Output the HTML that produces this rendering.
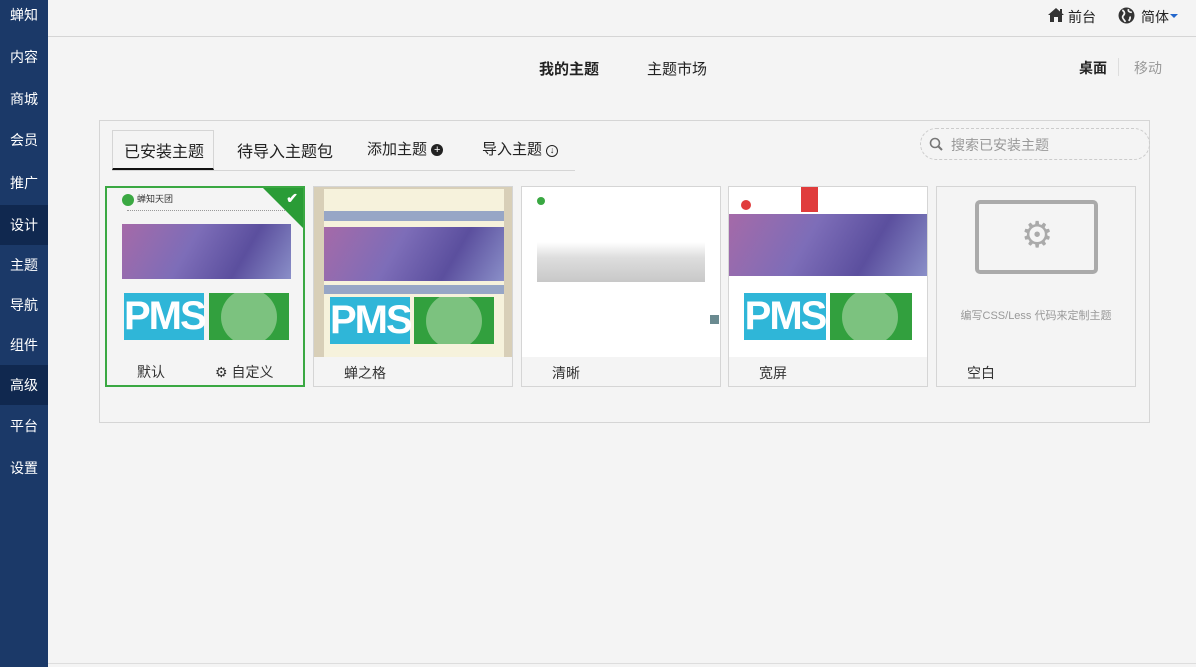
<!DOCTYPE html><html><head><meta charset="utf-8"><style>
*{margin:0;padding:0;box-sizing:border-box}
body{width:1196px;height:667px;background:#f4f4f4;font-family:"Liberation Sans","Noto Sans CJK SC",sans-serif;font-size:14px;color:#222;position:relative;overflow:hidden}
.side{position:absolute;left:0;top:0;width:48px;height:667px;background:#1b3968}
.side div{position:absolute;left:0;width:48px;height:40px;line-height:40px;text-align:center;color:#fff;font-size:14px}
.side .act{background:#10284f}
.top{position:absolute;left:48px;top:0;right:0;height:37px;border-bottom:1px solid #d5d5d5}
.abs{position:absolute}
.panel{position:absolute;left:99px;top:120px;width:1051px;height:303px;border:1px solid #d5d5d5}
.card{position:absolute;top:186px;width:200px;height:201px;border:1px solid #d5d5d5;background:#f4f4f4}
.thumb{position:absolute;left:0;top:0;width:198px;height:170px;background:#fff;overflow:hidden}
.lbl{position:absolute;top:176px;font-size:14px;color:#333}
.hero{position:absolute;background:linear-gradient(120deg,#a56aa8,#7d6db8 40%,#5b4f9e 70%,#8a8fc8)}
.pms{position:absolute;background:#2fb6d8;color:#fff;font-weight:bold;font-size:40px;letter-spacing:-2px;text-align:center;font-family:"Liberation Sans Narrow","Liberation Sans",sans-serif}
.grp{position:absolute;background:#32a03e;overflow:hidden}
.grp i{position:absolute;left:12px;top:-4px;width:56px;height:56px;border-radius:50%;background:#7cc27f}
</style></head><body>
<div class="side">
<div style="top:-5px">蝉知</div><div style="top:37px">内容</div><div style="top:79px">商城</div><div style="top:120px">会员</div><div style="top:163px">推广</div><div class="act" style="top:205px">设计</div><div style="top:245px">主题</div><div style="top:285px">导航</div><div style="top:325px">组件</div><div class="act" style="top:365px">高级</div><div style="top:406px">平台</div><div style="top:448px">设置</div>
</div>
<div class="top"></div>
<div class="abs" style="left:48px;top:663px;width:1148px;height:1px;background:#ddd"></div>
<svg class="abs" style="left:1047px;top:7px" width="18" height="16" viewBox="0 0 18 16"><path d="M9 1L1 8h2v7h4v-5h4v5h4V8h2z" fill="#333"/><rect x="13" y="2" width="2" height="4" fill="#333"/></svg>
<div class="abs" style="left:1068px;top:7px">前台</div>
<svg class="abs" style="left:1118px;top:7px" width="17" height="17" viewBox="0 0 16 16"><circle cx="8" cy="8" r="7.5" fill="#333"/><path d="M4 3c2 1 3 3 1 5s1 4 2 6M10 2c-1 2 1 3 3 3M11 9c1 1 0 3-1 4" stroke="#f4f4f4" stroke-width="1.6" fill="none"/></svg>
<div class="abs" style="left:1141px;top:7px">简体</div>
<div class="abs" style="left:1170px;top:14px;border:4px solid transparent;border-top-color:#2266cc;border-bottom:0"></div>
<div class="abs" style="left:539px;top:58px;font-size:15px;font-weight:bold">我的主题</div>
<div class="abs" style="left:647px;top:58px;font-size:15px">主题市场</div>
<div class="abs" style="left:1079px;top:58px;font-weight:bold">桌面</div>
<div class="abs" style="left:1118px;top:58px;width:1px;height:18px;background:#ddd"></div>
<div class="abs" style="left:1134px;top:58px;color:#999">移动</div>
<div class="panel"></div>
<div class="abs" style="left:112px;top:170px;width:463px;height:1px;background:#d5d5d5"></div>
<div class="abs" style="left:112px;top:130px;width:102px;height:40px;border:1px solid #d5d5d5;border-bottom:2px solid #111;background:#f4f4f4"></div>
<div class="abs" style="left:124px;top:138px;font-size:16px">已安装主题</div>
<div class="abs" style="left:237px;top:138px;font-size:16px">待导入主题包</div>
<div class="abs" style="left:367px;top:138px;font-size:15px">添加主题 <span style="display:inline-block;width:12px;height:12px;border-radius:50%;background:#222;color:#fff;font-size:11px;line-height:12px;text-align:center;vertical-align:1px">+</span></div>
<div class="abs" style="left:482px;top:138px;font-size:15px">导入主题 <span style="display:inline-block;width:12px;height:12px;border-radius:50%;border:1.5px solid #222;font-size:9px;line-height:9px;text-align:center;vertical-align:1px">↓</span></div>
<div class="abs" style="left:920px;top:128px;width:230px;height:32px;border:1px dashed #ccc;border-radius:16px"></div>
<svg class="abs" style="left:929px;top:137px" width="14" height="14"><circle cx="6" cy="6" r="4.5" stroke="#777" stroke-width="1.6" fill="none"/><path d="M9 9l4 4" stroke="#777" stroke-width="2"/></svg>
<div class="abs" style="left:951px;top:135px;color:#999">搜索已安装主题</div>

<div class="card" style="left:105px;border:2px solid #3aa842">
<div class="thumb" style="width:196px;background:#f4f4f4">
<div class="abs" style="left:15px;top:6px;width:12px;height:12px;border-radius:50%;background:#3aa842"></div>
<div class="abs" style="left:30px;top:4px;font-size:9px;color:#333">蝉知天团</div>
<div class="abs" style="left:20px;top:22px;width:160px;height:3px;border-top:1px dotted #999"></div>
<div class="hero" style="left:15px;top:36px;width:169px;height:55px"></div>
<div class="pms" style="left:17px;top:105px;width:80px;height:47px;line-height:47px">PMS</div>
<div class="grp" style="left:102px;top:105px;width:80px;height:47px"><i></i></div>
<div class="abs" style="right:0;top:0;border-top:40px solid #2a9c36;border-left:40px solid transparent"></div>
<div class="abs" style="right:5px;top:2px;color:#fff;font-size:14px;font-weight:bold">✔</div>
</div>
<div class="lbl" style="left:30px;top:174px">默认</div>
<div class="lbl" style="left:108px;top:174px">⚙ 自定义</div>
</div>

<div class="card" style="left:313px">
<div class="thumb" style="background:#d8cfb8">
<div class="abs" style="left:10px;top:2px;width:180px;height:168px;background:#f6f2dc"></div>
<div class="abs" style="left:10px;top:24px;width:180px;height:10px;background:#97a6c6"></div>
<div class="hero" style="left:10px;top:40px;width:180px;height:54px"></div>
<div class="abs" style="left:10px;top:98px;width:180px;height:9px;background:#97a6c6"></div>
<div class="pms" style="left:16px;top:110px;width:80px;height:47px;line-height:47px">PMS</div>
<div class="grp" style="left:100px;top:110px;width:80px;height:47px"><i></i></div>
</div>
<div class="lbl" style="left:30px">蝉之格</div>
</div>

<div class="card" style="left:521px">
<div class="thumb">
<div class="abs" style="left:15px;top:10px;width:8px;height:8px;border-radius:50%;background:#3aa842"></div>
<div class="abs" style="left:15px;top:55px;width:168px;height:40px;background:linear-gradient(#fff,#ddd 40%,#c8c8c8)"></div>
<div class="abs" style="left:188px;top:128px;width:9px;height:9px;background:#6a8a90"></div>
</div>
<div class="lbl" style="left:30px">清晰</div>
</div>

<div class="card" style="left:728px">
<div class="thumb">
<div class="abs" style="left:12px;top:13px;width:10px;height:10px;border-radius:50%;background:#e03c3c"></div>
<div class="abs" style="left:72px;top:0;width:17px;height:25px;background:#e03c3c"></div>
<div class="hero" style="left:0;top:27px;width:198px;height:62px"></div>
<div class="pms" style="left:15px;top:106px;width:82px;height:47px;line-height:47px">PMS</div>
<div class="grp" style="left:101px;top:106px;width:82px;height:47px"><i></i></div>
</div>
<div class="lbl" style="left:30px">宽屏</div>
</div>

<div class="card" style="left:936px">
<div class="thumb" style="background:#f4f4f4">
<div class="abs" style="left:38px;top:13px;width:123px;height:74px;border:4px solid #aaa;border-radius:5px"></div>
<div class="abs" style="left:84px;top:28px;font-size:36px;color:#aaa;line-height:40px">⚙</div>
<div class="abs" style="left:0;top:120px;width:198px;text-align:center;font-size:11px;color:#999">编写CSS/Less 代码来定制主题</div>
</div>
<div class="lbl" style="left:30px">空白</div>
</div>
</body></html>
